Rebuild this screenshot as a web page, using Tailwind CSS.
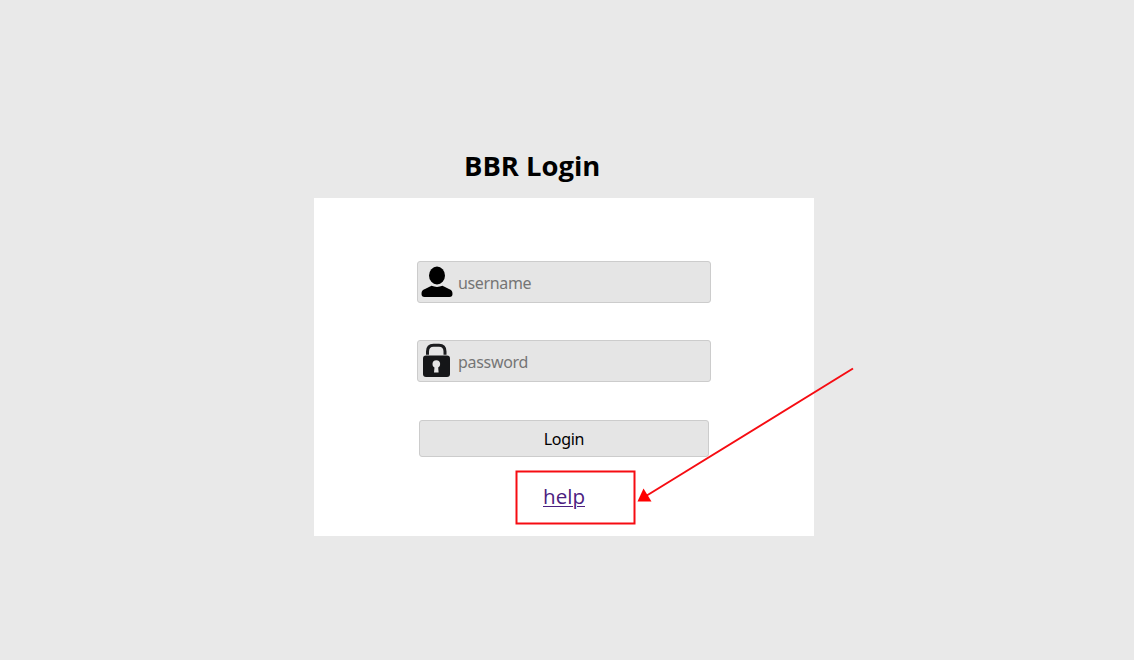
<!DOCTYPE html>
<html lang="en">
<head>
    <meta charset="UTF-8">
    <meta name="viewport" content="width=device-width, initial-scale=1.0">
    <title>BBR Login</title>
    <script src="https://cdn.jsdelivr.net/npm/@tailwindcss/browser@4"></script>
</head>
<body class="h-screen overflow-hidden bg-[#e9e9e9] pt-[146px] font-['Open_Sans','Noto_Sans',sans-serif] text-black">
    <div class="ml-[314px] w-[500px]">
        <h1 class="h-[52px] pl-[150px] text-[27.4px] leading-[39px] font-bold whitespace-nowrap">BBR Login</h1>

        <!-- Login form -->
        <form class="flex h-[338px] flex-col items-center bg-white pt-[63px]">
            <label class="mb-[37px] flex h-[42px] w-[294px] items-center rounded-[3px] border border-[#cccccc] bg-[#e5e5e5] pl-[3px]">
                <svg class="h-8 w-8 shrink-0" viewBox="0 0 32 32" fill="#000">
                    <ellipse cx="16" cy="9.5" rx="8" ry="9" />
                    <path d="M0.5 28C0.5 25 1.5 24 4 23L10.5 19.8Q16 22 21.5 19.8L28 23C30.5 24 31.5 25 31.5 28Q31.5 31 28.5 31H3.5Q0.5 31 0.5 28Z" />
                </svg>
                <input type="text" placeholder="username" class="ml-[5px] h-full w-60 bg-transparent pt-px font-['Noto_Sans',sans-serif] text-base tracking-[-0.35px] outline-none placeholder:text-[#757575]">
            </label>
            <label class="mb-[38px] flex h-[42px] w-[294px] items-center rounded-[3px] border border-[#cccccc] bg-[#e5e5e5] pl-[3px]">
                <svg class="h-9 w-8 shrink-0" viewBox="0 0 32 36">
                    <path d="M6.5 11.8V8.5Q6.5 2.2 12.5 2.2H18Q24 2.2 24 8.5V11.8" fill="none" stroke="#1b1c1e" stroke-width="3" />
                    <rect x="2" y="12.5" width="27" height="21.5" rx="3" fill="#151618" />
                    <circle cx="15.3" cy="21" r="3.8" fill="#e5e5e5" />
                    <path d="M13.7 22H17L17.6 29.5H13Z" fill="#e5e5e5" />
                </svg>
                <input type="password" placeholder="password" class="ml-[5px] h-full w-60 bg-transparent pt-px font-['Noto_Sans',sans-serif] text-base tracking-[-0.3px] outline-none placeholder:text-[#757575]">
            </label>
            <button type="button" class="h-[37px] w-[290px] shrink-0 rounded-[3px] border border-[#cccccc] bg-[#e5e5e5] font-['Noto_Sans',sans-serif] text-base tracking-[-0.3px]">Login</button>
            <a href="#" class="mt-6 text-[20.6px] leading-[30px] text-[#4b2080] underline decoration-1 underline-offset-2">help</a>
        </form>
    </div>

    <!-- Callout pointing at the help link -->
    <svg class="pointer-events-none absolute inset-0 h-[660px] w-[1134px]" viewBox="0 0 1134 660">
        <rect x="516.5" y="471.5" width="118" height="52" fill="none" stroke="#f60c12" stroke-width="2" />
        <path d="M853 368.5L646 496" stroke="#f60c12" stroke-width="2" />
        <path d="M637.5 501.5L643.5 488.5L651.5 501.5Z" fill="#ff0000" />
    </svg>
</body>
</html>
